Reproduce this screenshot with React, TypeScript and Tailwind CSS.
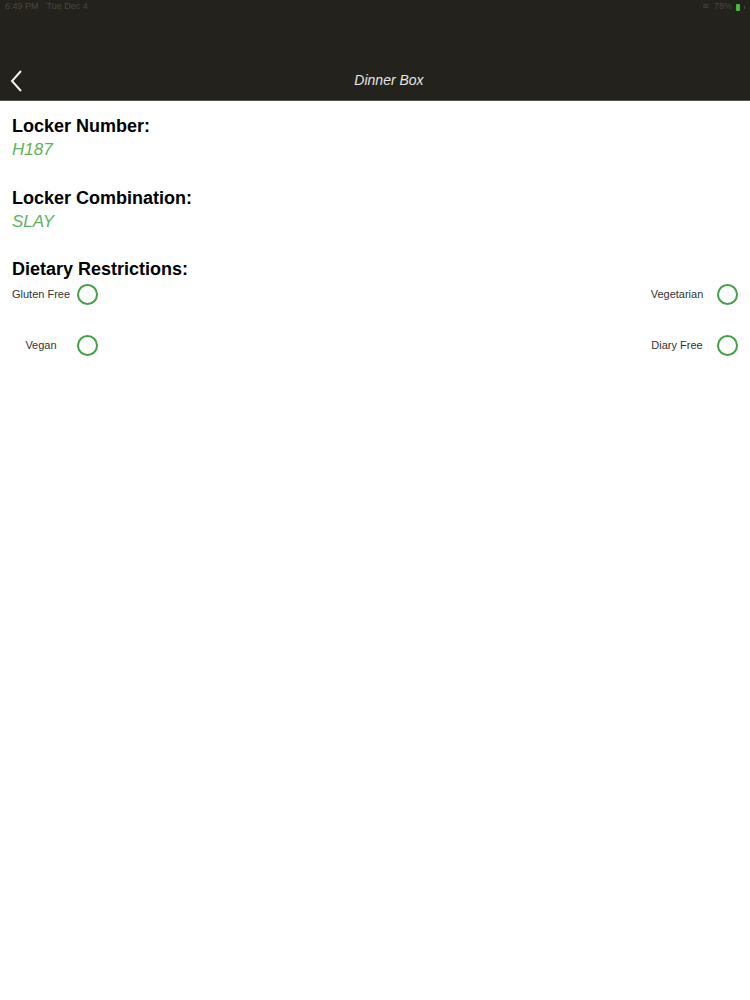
import React from "react";

const Option = ({ label, wide }: { label: string; wide?: boolean }) => {
  return (
    <div className="flex items-center">
      <span
        className={
          wide
            ? "w-[66px] whitespace-nowrap text-center text-[11px] text-[#333]"
            : "w-[58px] whitespace-nowrap text-center text-[11px] text-[#333]"
        }
      >
        {label}
      </span>
      <span className="ml-[7px] h-[21px] w-[21px] rounded-full border-2 border-[#43a047]" />
    </div>
  );
};

const App = () => {
  return (
    <div className="min-h-[1000px] bg-white font-['Liberation_Sans',Arial,sans-serif]">
      <header className="flex h-[101px] flex-col bg-[#24221d]">
        <div className="flex h-[14px] items-center justify-between px-[5px] text-[9px] text-[#4a4740]">
          <div className="flex gap-[8px]">
            <span>6:49 PM</span>
            <span>Tue Dec 4</span>
          </div>
          <div className="flex items-center gap-[4px]">
            <span>≋</span>
            <span>78%</span>
            <span className="h-[7px] w-[4px] rounded-[1px] bg-[#3fbf3f]" />
            <span className="h-[3px] w-[1px] bg-[#4a4740]" />
          </div>
        </div>
        <div className="relative mt-auto flex h-[40px] items-center justify-center pl-[28px]">
          <svg
            className="absolute left-[10px] top-[10px]"
            width="14"
            height="22"
            viewBox="0 0 14 22"
            fill="none"
            stroke="#f2f2f2"
            strokeWidth="2"
          >
            <path d="M11 1 L2 11 L11 21" />
          </svg>
          <span className="text-[14px] italic text-[#e6e6e6]">Dinner Box</span>
        </div>
        <div className="h-px bg-[#555]" />
      </header>

      <main className="flex flex-col px-[12px] pt-[14px]">
        <h2 className="text-[18px] font-bold leading-[22px] text-black">Locker Number:</h2>
        <p className="mt-[3px] text-[17px] italic leading-[20px] text-[#5cb35c]">H187</p>

        <h2 className="mt-[27px] text-[18px] font-bold leading-[22px] text-black">
          Locker Combination:
        </h2>
        <p className="mt-[3px] text-[17px] italic leading-[20px] text-[#5cb35c]">SLAY</p>

        <h2 className="mt-[26px] text-[18px] font-bold leading-[22px] text-black">
          Dietary Restrictions:
        </h2>

        <div className="mt-[4px] flex flex-col gap-[30px]">
          <div className="flex items-center justify-between">
            <Option label="Gluten Free" />
            <Option label="Vegetarian" wide />
          </div>
          <div className="flex items-center justify-between">
            <Option label="Vegan" />
            <Option label="Diary Free" wide />
          </div>
        </div>
      </main>
    </div>
  );
};

export default App;
